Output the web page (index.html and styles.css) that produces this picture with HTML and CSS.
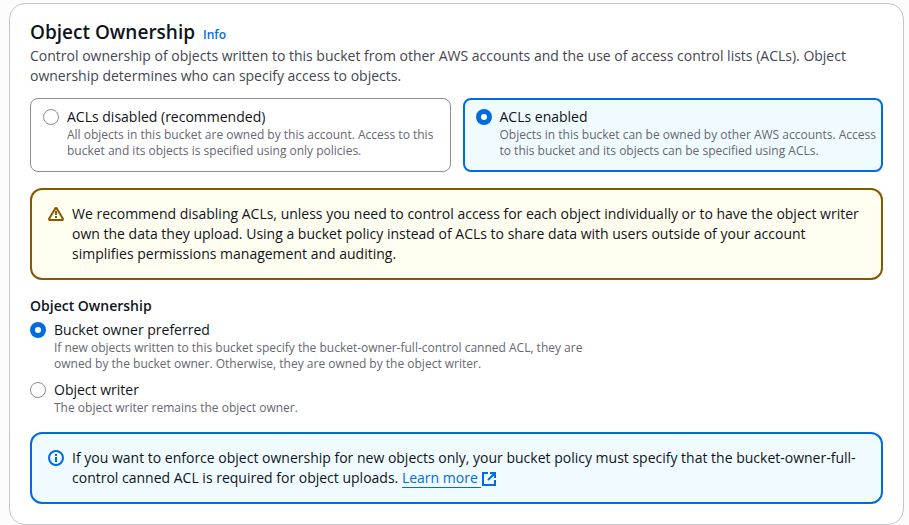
FILE: index.html
```html
<!DOCTYPE html>
<html lang="en">
<head>
<meta charset="utf-8">
<title>Object Ownership</title>
<link rel="stylesheet" href="styles.css">
</head>
<body>
<section class="panel">
  <header class="panel-header">
    <div class="heading"><h2>Object Ownership</h2><a class="info" href="#">Info</a></div>
    <p class="description">Control ownership of objects written to this bucket from other AWS accounts and the use of access control lists (ACLs). Object ownership determines who can specify access to objects.</p>
  </header>
  <div class="tiles">
    <label class="tile option">
      <input type="radio" name="acl">
      <span class="option-text"><span class="option-label">ACLs disabled (recommended)</span>
      <span class="option-hint">All objects in this bucket are owned by this account. Access to this bucket and its objects is specified using only policies.</span></span>
    </label>
    <label class="tile option selected">
      <input type="radio" name="acl" checked>
      <span class="option-text"><span class="option-label">ACLs enabled</span>
      <span class="option-hint">Objects in this bucket can be owned by other AWS accounts. Access to this bucket and its objects can be specified using ACLs.</span></span>
    </label>
  </div>
  <div class="alert warning">
    <svg class="alert-icon" viewBox="0 0 16 16" aria-hidden="true"><path d="M7.500 2h1L15 13l-.5 1h-13L1 13Z" fill="none" stroke="currentColor" stroke-width="2" stroke-linejoin="round"/><path d="M8 5v4M8 10v2" stroke="currentColor" stroke-width="2"/></svg>
    <p>We recommend disabling ACLs, unless you need to control access for each object individually or to have the object writer own the data they upload. Using a bucket policy instead of ACLs to share data with users outside of your account simplifies permissions management and auditing.</p>
  </div>
  <fieldset class="ownership">
    <legend>Object Ownership</legend>
    <label class="option">
      <input type="radio" name="owner" checked>
      <span class="option-text"><span class="option-label">Bucket owner preferred</span>
      <span class="option-hint">If new objects written to this bucket specify the bucket-owner-full-control canned ACL, they are owned by the bucket owner. Otherwise, they are owned by the object writer.</span></span>
    </label>
    <label class="option">
      <input type="radio" name="owner">
      <span class="option-text"><span class="option-label">Object writer</span>
      <span class="option-hint">The object writer remains the object owner.</span></span>
    </label>
  </fieldset>
  <div class="alert note">
    <svg class="alert-icon" viewBox="0 0 16 16" aria-hidden="true"><circle cx="8" cy="8" r="7" fill="none" stroke="currentColor" stroke-width="2"/><path d="M8 4v2M8 7v5" fill="none" stroke="currentColor" stroke-width="2"/></svg>
    <p>If you want to enforce object ownership for new objects only, your bucket policy must specify that the bucket-owner-full-control canned ACL is required for object uploads. <a href="#"><span class="learn">Learn more </span><svg class="external" viewBox="0 0 16 16" aria-hidden="true"><path d="M7 2H2v12h12V9M9 2H14v5M14 2 7 9" fill="none" stroke="currentColor" stroke-width="2"/></svg></a></p>
  </div>
</section>
</body>
</html>
```
FILE: styles.css
```css
* { box-sizing: border-box; }
body {
  margin: 0;
  padding: 3px 5px 0 9px;
  background: #fcfcfd;
  color: #0f141a;
  font: 14px/20px "Open Sans", sans-serif;
}
h2, p { margin: 0; }
a { color: #006ce0; text-decoration: none; }
.panel {
  padding: 16px 20px 20px;
  border: 1px solid #c6c6cd;
  border-radius: 16px;
  background: #fff;
}
.heading { display: flex; align-items: baseline; gap: 8px; }
h2 { font-size: 19px; line-height: 24px; font-weight: 600; }
.info { font-size: 12px; line-height: 16px; font-weight: 600; }
.description { margin-top: 2px; color: #424650; }
.tiles { display: grid; grid-template-columns: 1fr 1fr; gap: 12px; margin-top: 12px; }
.option { display: flex; gap: 8px; }
.option-label, .option-hint { display: block; }
.option-hint { color: #656871; font-size: 12px; line-height: 16px; }
.tile {
  padding: 8px 4px 12px 12px;
  border: 1px solid #8c8c94;
  border-radius: 8px;
}
.tile.selected {
  padding: 7px 3px 11px 11px;
  border: 2px solid #006ce0;
  background: #f0fbff;
}
input {
  appearance: none;
  flex: none;
  width: 16px;
  height: 16px;
  margin: 2px 0;
  border: 1px solid #8c8c94;
  border-radius: 50%;
  background: #fff;
}
input:checked { border: 5px solid #006ce0; }
.alert {
  display: flex;
  gap: 8px;
  margin-top: 16px;
  padding: 14px 16px;
  border: 2px solid;
  border-radius: 12px;
}
.alert p { color: #0f141a; }
.alert-icon { flex: none; width: 16px; height: 16px; margin: 2px 0; }
.warning { color: #855900; background: #fffef0; }
.note { color: #006ce0; background: #f0fbff; }
.ownership { margin: 16px 0 0; padding: 0; border: 0; }
.ownership legend { padding: 0; font-weight: 600; }
.ownership .option { margin-top: 4px; }
.ownership .option + .option { margin-top: 8px; }
.ownership .option-text { max-width: 536px; }
.learn { border-bottom: 1px solid; }
.external { width: 16px; height: 16px; vertical-align: text-bottom; }
```
